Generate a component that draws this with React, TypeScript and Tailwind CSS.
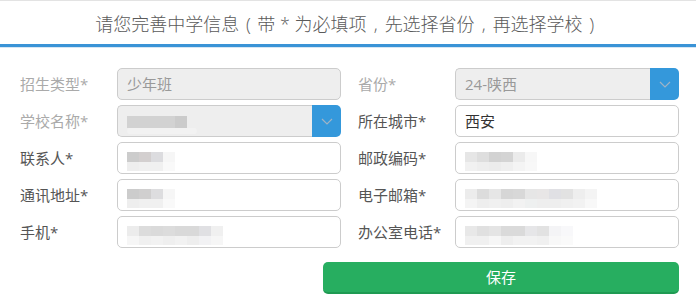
import React from "react";

const FONT = '"Open Sans", "Noto Sans CJK SC", "Noto Sans", sans-serif';

type BlurProps = { top: string[]; bottom: string[] };

function Blur({ top, bottom }: BlurProps) {
  return (
    <div className="flex flex-col self-stretch pt-[9px] pb-[2px] blur-[0.6px]">
      <div className="flex h-[11px]">
        {top.map((c, i) => (
          <div key={i} className="w-[12px] h-full" style={{ background: c }} />
        ))}
      </div>
      <div className="flex h-[10px]">
        {bottom.map((c, i) => (
          <div key={i} className="w-[12px] h-full" style={{ background: c }} />
        ))}
      </div>
    </div>
  );
}

function Chevron() {
  return (
    <svg width="12" height="7" viewBox="0 0 12 7" fill="none">
      <path d="M1 1l5 5 5-5" stroke="#9fb3c6" strokeWidth="1.2" />
    </svg>
  );
}

type FieldProps = {
  label: string;
  disabled?: boolean;
  select?: boolean;
  children?: React.ReactNode;
};

function Field({ label, disabled, select, children }: FieldProps) {
  return (
    <div className="flex items-center h-[32px]">
      <div
        className={`w-[97px] text-[15px] ${disabled ? "text-[#aaaaaa]" : "text-[#555555]"}`}
      >
        {label}
      </div>
      <div className="flex w-[224px] h-[32px]">
        <div
          className={`flex flex-1 items-center pl-[9px] border border-[#cccccc] text-[15px] overflow-hidden ${
            select ? "rounded-l-[5px] border-r-0" : "rounded-[5px]"
          } ${disabled ? "bg-[#eeeeee] text-[#999999]" : "bg-white text-[#333333]"}`}
        >
          {children}
        </div>
        {select && (
          <div className="w-[29px] flex items-center justify-center bg-[#3498db] rounded-r-[5px]">
            <Chevron />
          </div>
        )}
      </div>
    </div>
  );
}

function P({ c }: { c: string }) {
  return <span className="inline-block w-[18px] text-center">{c}</span>;
}

export default function App() {
  return (
    <div className="w-[696px] h-[307px] bg-white" style={{ fontFamily: FONT }}>
      <div className="border-t border-[#e3e3e3]">
        <div className="h-[43px] flex items-center justify-center pt-[4px] text-[18px] text-[#5a5a5a] font-light">
          <span>
            请您完善中学信息<P c="(" />带 * 为必填项<P c="," />先选择省份<P c="," />再选择学校<P c=")" />
          </span>
        </div>
        <div className="h-[3px] bg-[#3a93d6]" />
        <div className="h-[1px] bg-[#d6e6f3]" />
      </div>
      <div className="pl-[20px] pr-[17px] pt-[20px]">
        <div className="grid grid-cols-[321px_321px] gap-x-[17px] gap-y-[5px]">
          <Field label="招生类型*" disabled>
            少年班
          </Field>
          <Field label="省份*" disabled select>
            24-陕西
          </Field>
          <Field label="学校名称*" disabled select>
            <div className="flex flex-col self-stretch pt-[10px] blur-[0.5px]">
              <div className="flex h-[12px]">
                <div className="w-[48px] bg-[#d2d2d2]" />
                <div className="w-[12px] bg-[#cbcbcb]" />
              </div>
              <div className="h-[6px] w-[70px] bg-[#f2f2f2] rounded-full" />
            </div>
          </Field>
          <Field label="所在城市*">西安</Field>
          <Field label="联系人*">
            <Blur
              top={["#cccccc", "#d3cfcf", "#dcdcdf", "#f6f6f6"]}
              bottom={["#eeeeee", "#f0f0f0", "#f0f0f0", "#f9f9f9"]}
            />
          </Field>
          <Field label="邮政编码*">
            <Blur
              top={["#e6e6e6", "#dedede", "#d2d2d2", "#d4d4d4", "#ebebeb", "#f7f7f7"]}
              bottom={["#f1f1f1", "#eeeeee", "#ececec", "#efefef", "#f4f4f4", "#f8f8f8"]}
            />
          </Field>
          <Field label="通讯地址*">
            <Blur
              top={["#cccccc", "#d0cfcf", "#dddddf", "#f6f6f6"]}
              bottom={["#eeeeee", "#f0f0f0", "#f0f0f0", "#f9f9f9"]}
            />
          </Field>
          <Field label="电子邮箱*">
            <Blur
              top={[
                "#ececec", "#dcdcdc", "#e6e6e6", "#d6d6d6", "#d8d8d8", "#e6e6e6",
                "#e8e6e6", "#e0e0e4", "#e2e2e2", "#eeeeee", "#f4f4f4",
              ]}
              bottom={[
                "#f4f4f4", "#eeeeee", "#f0f0f0", "#eeeeee", "#f2f2f2", "#eef0f0",
                "#eeeeee", "#eeeeee", "#f0f0f0", "#f2f2f2", "#f8f8f8",
              ]}
            />
          </Field>
          <Field label="手机*">
            <Blur
              top={["#ececec", "#dcdcdc", "#dadada", "#dcdcdc", "#d9d9d9", "#d9d9d9", "#e0e0e3", "#f0f0f0"]}
              bottom={["#f6f6f6", "#f0f0f0", "#f2f2f2", "#efefef", "#f2f2f2", "#eeeeee", "#f2f2f4", "#f6f6f6"]}
            />
          </Field>
          <Field label="办公室电话*">
            <Blur
              top={["#e8e8e8", "#e0e0e0", "#e4e4e4", "#dadada", "#dadada", "#e6e6e8", "#e2e2e2", "#f4f4f6", "#f8f8fa"]}
              bottom={["#f0f0f0", "#f0f0f0", "#f6f6f6", "#eeeeee", "#f2f2f2", "#f2f2f2", "#f0f0f0", "#f8f8f8", "#fafafa"]}
            />
          </Field>
        </div>
        <div className="flex justify-end mt-[14px]">
          <button
            className="w-[356px] h-[32px] rounded-[5px] bg-[#27ae60] border-b-2 border-[#1f9a52] text-white text-[15px]"
            style={{ fontFamily: FONT }}
          >
            保存
          </button>
        </div>
      </div>
    </div>
  );
}
